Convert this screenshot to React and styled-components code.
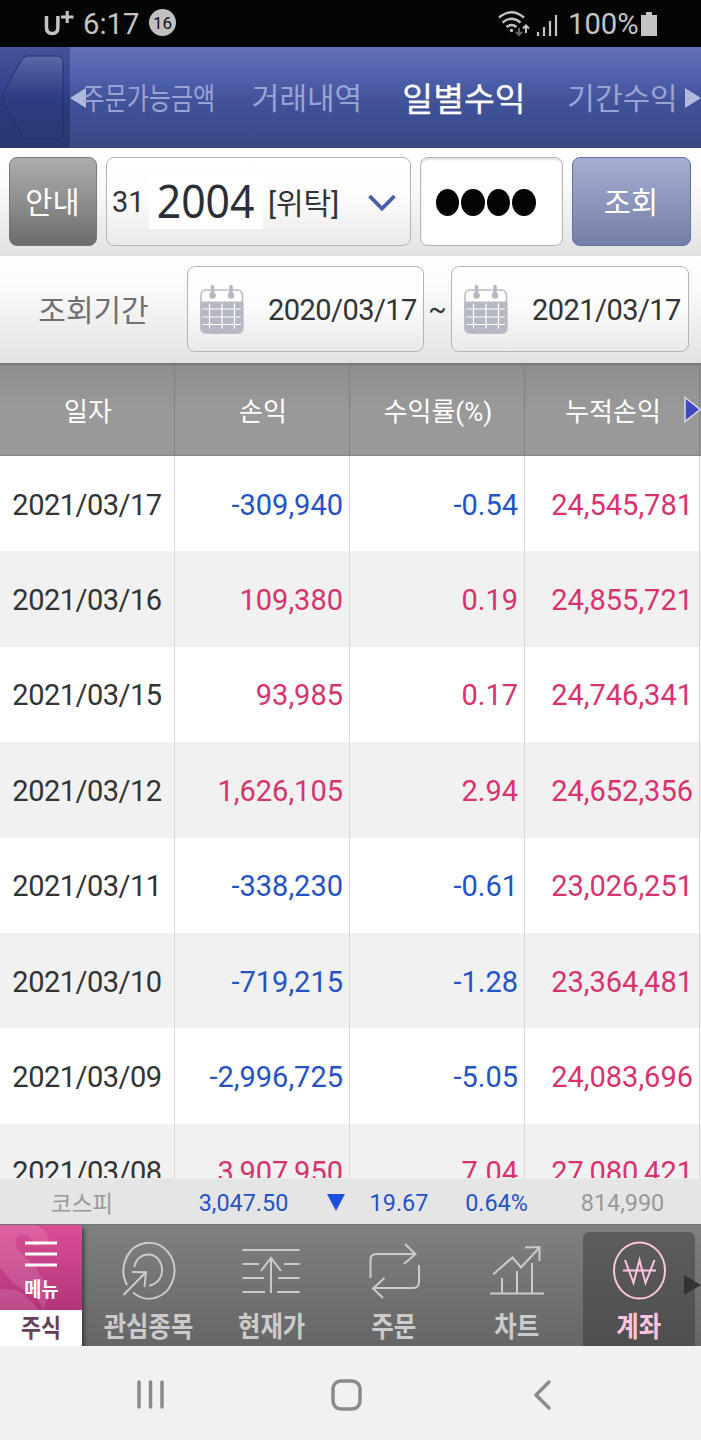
import React from "react";
import styled, { createGlobalStyle } from "styled-components";

const GlobalStyle = createGlobalStyle`
  * {
    box-sizing: border-box;
  }
  body {
    margin: 0;
    background: #f1f1f1;
    font-family: Roboto, "Noto Sans CJK KR", sans-serif;
  }
  svg {
    display: block;
    flex: none;
  }
`;

const Screen = styled.div`
  width: 701px;
  height: 1440px;
  display: flex;
  flex-direction: column;
  overflow: hidden;
`;

// text squeezed horizontally, stays centered in its cell
const Narrow = styled.span`
  display: inline-block;
  white-space: nowrap;
  transform: scaleX(${(p) => p.$scale || 1});
`;

const StatusBar = styled.header`
  height: 47px;
  flex: none;
  display: flex;
  align-items: center;
  padding: 0 44px;
  background: #050505;
  color: #c4c4c4;
  font-size: 29.2px;
`;

const Carrier = styled.div`
  display: flex;
  width: 39px;
`;

const Clock = styled.span`
  width: 66px;
`;

const Count = styled.span`
  width: 27px;
  height: 27px;
  margin-top: -2px;
  border-radius: 50%;
  background: #c0c0c0;
  color: #111;
  font-size: 17px;
  line-height: 28px;
  text-align: center;
`;

const StatusIcons = styled.div`
  margin-left: auto;
  display: flex;
  align-items: center;
`;

const Percent = styled.span`
  width: 73px;
  margin-left: 9px;
`;

const NavBar = styled.nav`
  height: 101px;
  flex: none;
  display: flex;
  align-items: center;
  background: linear-gradient(#6272ba 0%, #4f61ad 30%, #44549c 50%, #3d4f95 65%, #3b4985 100%);
`;

const BackArea = styled.div`
  width: 70px;
  height: 101px;
  background: linear-gradient(#46539a 0%, #34448c 40%, #2b3a7c 60%, #2a3770 100%);
`;

const Tab = styled.div`
  width: ${(p) => p.$width}px;
  flex: none;
  display: flex;
  justify-content: center;
  padding: 0 0 ${(p) => (p.$active ? 2 : 4)}px ${(p) => p.$indent || 0}px;
  font-size: ${(p) => (p.$active ? 33.5 : 30)}px;
  -webkit-text-stroke: ${(p) => (p.$active ? "0.25px" : "0")} currentColor;
  color: ${(p) => (p.$active ? "#fff" : "#98a3d6")};
`;

const QueryRow = styled.div`
  height: 108px;
  flex: none;
  display: flex;
  gap: 9px;
  padding: 9px 9px 10px;
  background: linear-gradient(#fff 0%, #fafafa 35%, #e2e2e2 100%);
`;

const Button = styled.button`
  width: ${(p) => p.$width}px;
  height: 89px;
  padding: 0 1px 3px 0;
  border: 1px solid ${(p) => (p.$primary ? "#6472a0" : "#777")};
  border-radius: 8px;
  color: #fff;
  font: 400 29.5px "Noto Sans CJK KR", sans-serif;
  background: ${(p) =>
    p.$primary
      ? "linear-gradient(#a5afd2, #8f99c0 45%, #757ea6)"
      : "linear-gradient(#adadad, #919191 45%, #6c6c6c)"};
`;

const Field = styled.div`
  width: ${(p) => p.$width}px;
  height: ${(p) => p.$height || 89}px;
  flex: none;
  display: flex;
  align-items: center;
  border: 1px solid #b4b4b4;
  border-radius: 8px;
  background: linear-gradient(#fff, #fcfcfc 45%, #e9e9e9);
  color: #333;
  font-size: 29px;
`;

const AccountField = styled(Field)`
  padding-left: 5px;
`;

const AccountNumber = styled.span`
  width: 114px;
  height: 56px;
  margin: -2px 3px 0 4px;
  background: #fff;
  color: #2b2f36;
  font: 46px/54px "Noto Sans", sans-serif;
  text-align: center;
`;

const AccountKind = styled.span`
  width: 76px;
  display: flex;
  justify-content: center;
  margin-right: 25px;
  padding-bottom: 1px;
  font-size: 30px;
`;

const PinField = styled(Field)`
  padding: 2px 0 0 15px;
  gap: 2px;
  background: #fff;
  box-shadow: inset 0 2px 2px rgba(0, 0, 0, 0.12);
`;

const Dot = styled.span`
  width: 23.4px;
  height: 27px;
  border-radius: 50%;
  background: #050505;
`;

const PeriodRow = styled.div`
  height: 107px;
  flex: none;
  display: flex;
  align-items: center;
  padding-bottom: 1px;
  background: linear-gradient(#fff 0%, #fafafa 30%, #e2e2e2 100%);
  color: #707070;
  font-size: 30px;
`;

const PeriodLabel = styled.div`
  width: 187px;
  padding-bottom: 3px;
  text-align: center;
`;

const DateField = styled(Field)`
  padding: 1px 0 0 11px;
  gap: 23px;
  letter-spacing: -0.55px;
`;

const Tilde = styled.span`
  width: 27px;
  text-align: center;
  color: #333;
  font-size: 27px;
`;

const TableHead = styled.div`
  height: 93px;
  flex: none;
  display: flex;
  position: relative;
  border-top: 2px solid #777;
  border-bottom: 1px solid #858585;
  background: linear-gradient(#8e8e8e, #999 50%, #999);
  color: #fff;
  font-size: 26px;
`;

const HeadCell = styled.div`
  width: 175px;
  flex: none;
  display: flex;
  align-items: center;
  justify-content: center;
  padding: 0 0 2px 2px;
  border-right: 1px solid #828282;
`;

const MoreColumns = styled.div`
  position: absolute;
  right: 0;
  top: 31px;
`;

const TableBody = styled.div`
  height: 722px;
  flex: none;
  overflow: hidden;
`;

const Row = styled.div`
  height: 95.4px;
  display: flex;
  background: ${(p) => (p.$odd ? "#f1f1f1" : "#fff")};
`;

const TONES = { text: "#333", up: "#d6336f", down: "#2453c6", muted: "#999" };

const Cell = styled.div`
  width: 175px;
  flex: none;
  display: flex;
  align-items: center;
  justify-content: ${(p) => (p.$date ? "center" : "flex-end")};
  padding: 2px ${(p) => (p.$date ? 0 : 6)}px 0 0;
  border-right: 1px solid #d8d8d8;
  color: ${(p) => TONES[p.$tone]};
  font-size: 29px;
  letter-spacing: ${(p) => (p.$date ? "-0.5px" : "normal")};
`;

const Ticker = styled.div`
  height: 46px;
  flex: none;
  display: flex;
  align-items: center;
  border-top: 1px solid #ececec;
  background: #e5e5e5;
`;

const TickerItem = styled.div`
  width: ${(p) => p.$width}px;
  display: flex;
  justify-content: center;
  padding-top: ${(p) => (p.$korean ? 0 : 2)}px;
  color: ${(p) => TONES[p.$tone]};
  font-size: ${(p) => (p.$korean ? 22.5 : 23.4)}px;
`;

const Toolbar = styled.div`
  height: 122px;
  flex: none;
  display: flex;
  position: relative;
  overflow: hidden;
  border-top: 1px solid #727272;
  background: linear-gradient(#808080, #666);
`;

const MenuTile = styled.div`
  width: 82px;
  display: flex;
  flex-direction: column;
  background: #fff;
  box-shadow: 2px 3px 4px rgba(0, 0, 0, 0.5);
  font-family: "Noto Sans CJK KR", sans-serif;
  font-weight: 700;
`;

const MenuTop = styled.div`
  height: 85px;
  position: relative;
  overflow: hidden;
  background: linear-gradient(#da4e94, #b23578);
  color: #fff;
`;

const MenuContent = styled.div`
  position: absolute;
  inset: 0;
  display: flex;
  flex-direction: column;
  align-items: center;
  padding-top: 16px;
  font-size: 20px;
  line-height: 44px;
`;

const MenuBottom = styled.div`
  height: 36px;
  color: #65405a;
  font-size: 25px;
  line-height: 33px;
  text-align: center;
`;

const Tool = styled.div`
  width: ${(p) => p.$width}px;
  margin-left: ${(p) => p.$gap || 0}px;
  margin-top: ${(p) => (p.$active ? 7 : 0)}px;
  padding-top: ${(p) => (p.$active ? 8 : 15)}px;
  display: flex;
  flex-direction: column;
  align-items: center;
  border-radius: 6px 6px 0 0;
  background: ${(p) => (p.$active ? "linear-gradient(#5c5c5c, #4e4e4e)" : "none")};
  color: ${(p) => (p.$active ? "#fbc5df" : "#cbcbcb")};
  font: 700 28px/50px "Noto Sans CJK KR", sans-serif;
`;

const MoreTools = styled.div`
  position: absolute;
  right: 0;
  top: 50px;
`;

const SystemNav = styled.footer`
  height: 94px;
  display: flex;
  align-items: center;
  padding: 4px 0 0 136px;
  background: #f1f1f1;
`;

const WonCircle = () => (
  <svg width="60" height="60" viewBox="0 0 60 60" fill="none" stroke="currentColor" strokeWidth="2">
    <ellipse cx="30.5" cy="30.5" rx="25.5" ry="28" />
    <path d="M16 20l8.500 23L30.500 20l6 23 9-23M14 30.500h33" />
  </svg>
);

const TargetIcon = () => (
  <svg width="60" height="60" viewBox="0 0 60 60" fill="none" stroke="currentColor" strokeWidth="2">
    <g transform="translate(-1 0)">
      <path d="M9 45A25.500 28 0 1 1 15 52.600" />
      <path d="M16.300 27A14 15.500 0 1 1 31 45.400M5.500 55L28 32M14 32l14 .3L26.500 47" />
    </g>
  </svg>
);

const QuoteIcon = () => (
  <svg width="60" height="60" viewBox="0 0 60 60" fill="none" stroke="currentColor" strokeWidth="2">
    <path d="M.5 10h57M.5 24H17M42 24h15.500M.5 38H22M36 38h21.500M.5 52H23M35 52h22.500M29 53V18M19 31l10-13 10 13" />
  </svg>
);

const OrderIcon = () => (
  <svg width="60" height="60" viewBox="0 0 60 60" fill="none" stroke="currentColor" strokeWidth="2">
    <path d="M6.500 38V20q0-6 6-6H51M41 4l10.500 10L40 24M55 25v17q0 6-6 6H9M20.500 38L9 48.500 19 58" />
  </svg>
);

const ChartIcon = () => (
  <svg width="60" height="60" viewBox="0 0 60 60" fill="none" stroke="currentColor" strokeWidth="2">
    <path d="M3 53.500h54M15 53V38M30 53V31M45 53V23M6 34.500l19.500-17 8.500 10L52 8M38 7.500l14.500-.5v14" />
  </svg>
);

const CalendarIcon = () => (
  <svg width="46" height="56" viewBox="0 0 46 56">
    <rect x="2" y="8" width="41.500" height="43" rx="5" fill="#fff" stroke="#b6b9c4" strokeWidth="1.500" />
    <path d="M1.500 19.500h43v27q0 5-5 5h-33q-5 0-5-5z" fill="#b6b9c4" />
    <path d="M13.500 4.500v9M32 4.500v9" stroke="#b6b9c4" strokeWidth="3.500" strokeLinecap="round" />
    <circle cx="13.500" cy="13.500" r="3.300" fill="#b6b9c4" />
    <circle cx="32" cy="13.500" r="3.300" fill="#b6b9c4" />
    <path d="M3.500 27h38.500M3.500 35h38.500M3.500 42.500h38.500M10.500 21.500v25M23 21.500v25M35.500 21.500v25" stroke="#fff" strokeWidth="1.200" />
  </svg>
);

const TABS = [
  { label: "주문가능금액", width: 125, scale: 0.8 },
  { label: "거래내역", width: 190, indent: 2 },
  { label: "일별수익", width: 126, active: true },
  { label: "기간수익", width: 158, indent: 33 },
];

const ROWS = [
  ["2021/03/17", "-309,940", "-0.54", "24,545,781"],
  ["2021/03/16", "109,380", "0.19", "24,855,721"],
  ["2021/03/15", "93,985", "0.17", "24,746,341"],
  ["2021/03/12", "1,626,105", "2.94", "24,652,356"],
  ["2021/03/11", "-338,230", "-0.61", "23,026,251"],
  ["2021/03/10", "-719,215", "-1.28", "23,364,481"],
  ["2021/03/09", "-2,996,725", "-5.05", "24,083,696"],
  ["2021/03/08", "3,907,950", "7.04", "27,080,421"],
];

const TOOLS = [
  { label: "관심종목", icon: TargetIcon, width: 124, gap: 5 },
  { label: "현재가", icon: QuoteIcon, width: 121 },
  { label: "주문", icon: OrderIcon, width: 124 },
  { label: "차트", icon: ChartIcon, width: 122 },
  { label: "계좌", icon: WonCircle, width: 112, gap: 5, active: true },
];

const tone = (value) => (value.startsWith("-") ? "down" : "up");

const App = () => (
  <Screen>
    <GlobalStyle />
    <StatusBar>
      <Carrier>
        <svg width="31" height="28" viewBox="0 0 31 28" fill="none" stroke="#c4c4c4">
          <path d="M2.500 6v11.500q0 6 5.700 6t5.700-6V6" strokeWidth="3.500" />
          <path d="M17 7h12.500M23.200 1v12" strokeWidth="3" />
        </svg>
      </Carrier>
      <Clock>6:17</Clock>
      <Count>16</Count>
      <StatusIcons>
        <svg width="62" height="26" viewBox="0 0 62 26" fill="none" stroke="#c4c4c4" strokeWidth="2.300">
          <path d="M2 6.500q12.500-10.500 25 0M5.500 11.500q9-7.500 18 0M9.500 16q5-4 10 0" />
          <circle cx="14.500" cy="19.500" r="1.700" fill="#c4c4c4" stroke="none" />
          <path d="M29 22v-7M26 17.500l3-3 3 3" strokeWidth="2" />
          <path d="M22 17v7M19 21l3 3 3-3" stroke="#666" strokeWidth="2" />
          <path d="M41 21v4M47 16v9M53 10v15M59 4v21" strokeWidth="2.200" />
        </svg>
        <Percent>100%</Percent>
        <svg width="16" height="24" viewBox="0 0 16 24" fill="#c4c4c4">
          <path d="M5 0h6v3h5v21H0V3h5z" />
        </svg>
      </StatusIcons>
    </StatusBar>

    <NavBar>
      <BackArea>
        <svg width="70" height="101" viewBox="0 0 70 101">
          <defs>
            <linearGradient id="back" x2="0" y2="1">
              <stop offset="0" stopColor="#5b68a6" />
              <stop offset=".5" stopColor="#2d3d83" />
              <stop offset="1" stopColor="#2b3874" />
            </linearGradient>
          </defs>
          <path
            d="M27 9h30q6 0 6 6v71q0 6-6 6H28q-4 0-6-4L2 52q-1-2 0-4l19-34q3-5 6-5z"
            fill="url(#back)"
            stroke="#24306a"
          />
        </svg>
      </BackArea>
      <svg width="16" height="20" viewBox="0 0 16 20">
        <path d="M16 0v20L0 10z" fill="#b1badf" />
      </svg>
      {TABS.map(({ label, width, scale, indent, active }) => (
        <Tab key={label} $width={width} $indent={indent} $active={active}>
          <Narrow $scale={scale}>{label}</Narrow>
        </Tab>
      ))}
      <svg width="16" height="20" viewBox="0 0 16 20">
        <path d="M0 0v20l16-10z" fill="#b1badf" />
      </svg>
    </NavBar>

    <QueryRow>
      <Button $width={88}>안내</Button>
      <AccountField $width={305}>
        31
        <AccountNumber>
          <Narrow $scale={0.93}>2004</Narrow>
        </AccountNumber>
        <AccountKind>[위탁]</AccountKind>
        <svg width="30" height="20" viewBox="0 0 30 20" fill="none" stroke="#4a5dab" strokeWidth="3.800">
          <path d="M2.500 4L15 16.500 27.500 4" />
        </svg>
      </AccountField>
      <PinField $width={143}>
        <Dot />
        <Dot />
        <Dot />
        <Dot />
      </PinField>
      <Button $width={119} $primary>
        조회
      </Button>
    </QueryRow>

    <PeriodRow>
      <PeriodLabel>조회기간</PeriodLabel>
      <DateField $width={237} $height={86}>
        <CalendarIcon />
        2020/03/17
      </DateField>
      <Tilde>~</Tilde>
      <DateField $width={238} $height={86}>
        <CalendarIcon />
        2021/03/17
      </DateField>
    </PeriodRow>

    <TableHead>
      <HeadCell>일자</HeadCell>
      <HeadCell>손익</HeadCell>
      <HeadCell>수익률(%)</HeadCell>
      <HeadCell>누적손익</HeadCell>
      <MoreColumns>
        <svg width="18" height="27" viewBox="0 0 18 27">
          <path d="M2 1.500v24L17 13.500z" fill="#4247c0" stroke="#d5d7ee" strokeWidth="1.500" />
        </svg>
      </MoreColumns>
    </TableHead>

    <TableBody>
      {ROWS.map(([date, profit, rate, total], i) => (
        <Row key={date} $odd={i % 2 === 1}>
          <Cell $date $tone="text">
            {date}
          </Cell>
          <Cell $tone={tone(profit)}>{profit}</Cell>
          <Cell $tone={tone(rate)}>{rate}</Cell>
          <Cell $tone={tone(total)}>{total}</Cell>
        </Row>
      ))}
    </TableBody>

    <Ticker>
      <TickerItem $width={164} $tone="muted" $korean>
        코스피
      </TickerItem>
      <TickerItem $width={159} $tone="down">
        3,047.50
      </TickerItem>
      <TickerItem $width={26}>
        <svg width="18" height="17" viewBox="0 0 18 17">
          <path d="M0 0h18L9 17z" fill="#1d4fe0" />
        </svg>
      </TickerItem>
      <TickerItem $width={100} $tone="down">
        19.67
      </TickerItem>
      <TickerItem $width={95} $tone="down">
        0.64%
      </TickerItem>
      <TickerItem $width={157} $tone="muted">
        814,990
      </TickerItem>
    </Ticker>

    <Toolbar>
      <MenuTile>
        <MenuTop>
          <svg width="82" height="85" viewBox="0 0 82 85" fill="#fff" fillOpacity=".12">
            <path d="M0 0h35q16 6 13 19-8 0-14 2Q31 7 20 10q-9 5 0 17 27 24 28 44-2 8-5 14-2-10-14-17Q14 62 0 42z" />
            <path d="M0 64q20-1 26 8 8 5 12 13H0z" />
          </svg>
          <MenuContent>
            <svg width="32" height="26" viewBox="0 0 32 26" stroke="#fff" strokeWidth="3">
              <path d="M0 2h32M0 13h32M0 24h32" />
            </svg>
            <Narrow $scale={0.93}>메뉴</Narrow>
          </MenuContent>
        </MenuTop>
        <MenuBottom>
          <Narrow $scale={0.87}>주식</Narrow>
        </MenuBottom>
      </MenuTile>
      {TOOLS.map(({ label, icon: Icon, width, gap, active }) => (
        <Tool key={label} $width={width} $gap={gap} $active={active}>
          <Icon />
          <Narrow $scale={0.87}>{label}</Narrow>
        </Tool>
      ))}
      <MoreTools>
        <svg width="17" height="20" viewBox="0 0 17 20">
          <path d="M0 0v20l17-10z" fill="#333" />
        </svg>
      </MoreTools>
    </Toolbar>

    <SystemNav>
      <svg width="420" height="36" viewBox="0 0 420 36" fill="none" stroke="#8a8a8a" strokeWidth="3.500" strokeLinecap="round">
        <path d="M3 5v25M14.500 5v25M26 5v25" />
        <rect x="197" y="4" width="27" height="28" rx="8" />
        <path d="M413 5l-13 13 13 13" strokeLinejoin="round" />
      </svg>
    </SystemNav>
  </Screen>
);

export default App;
